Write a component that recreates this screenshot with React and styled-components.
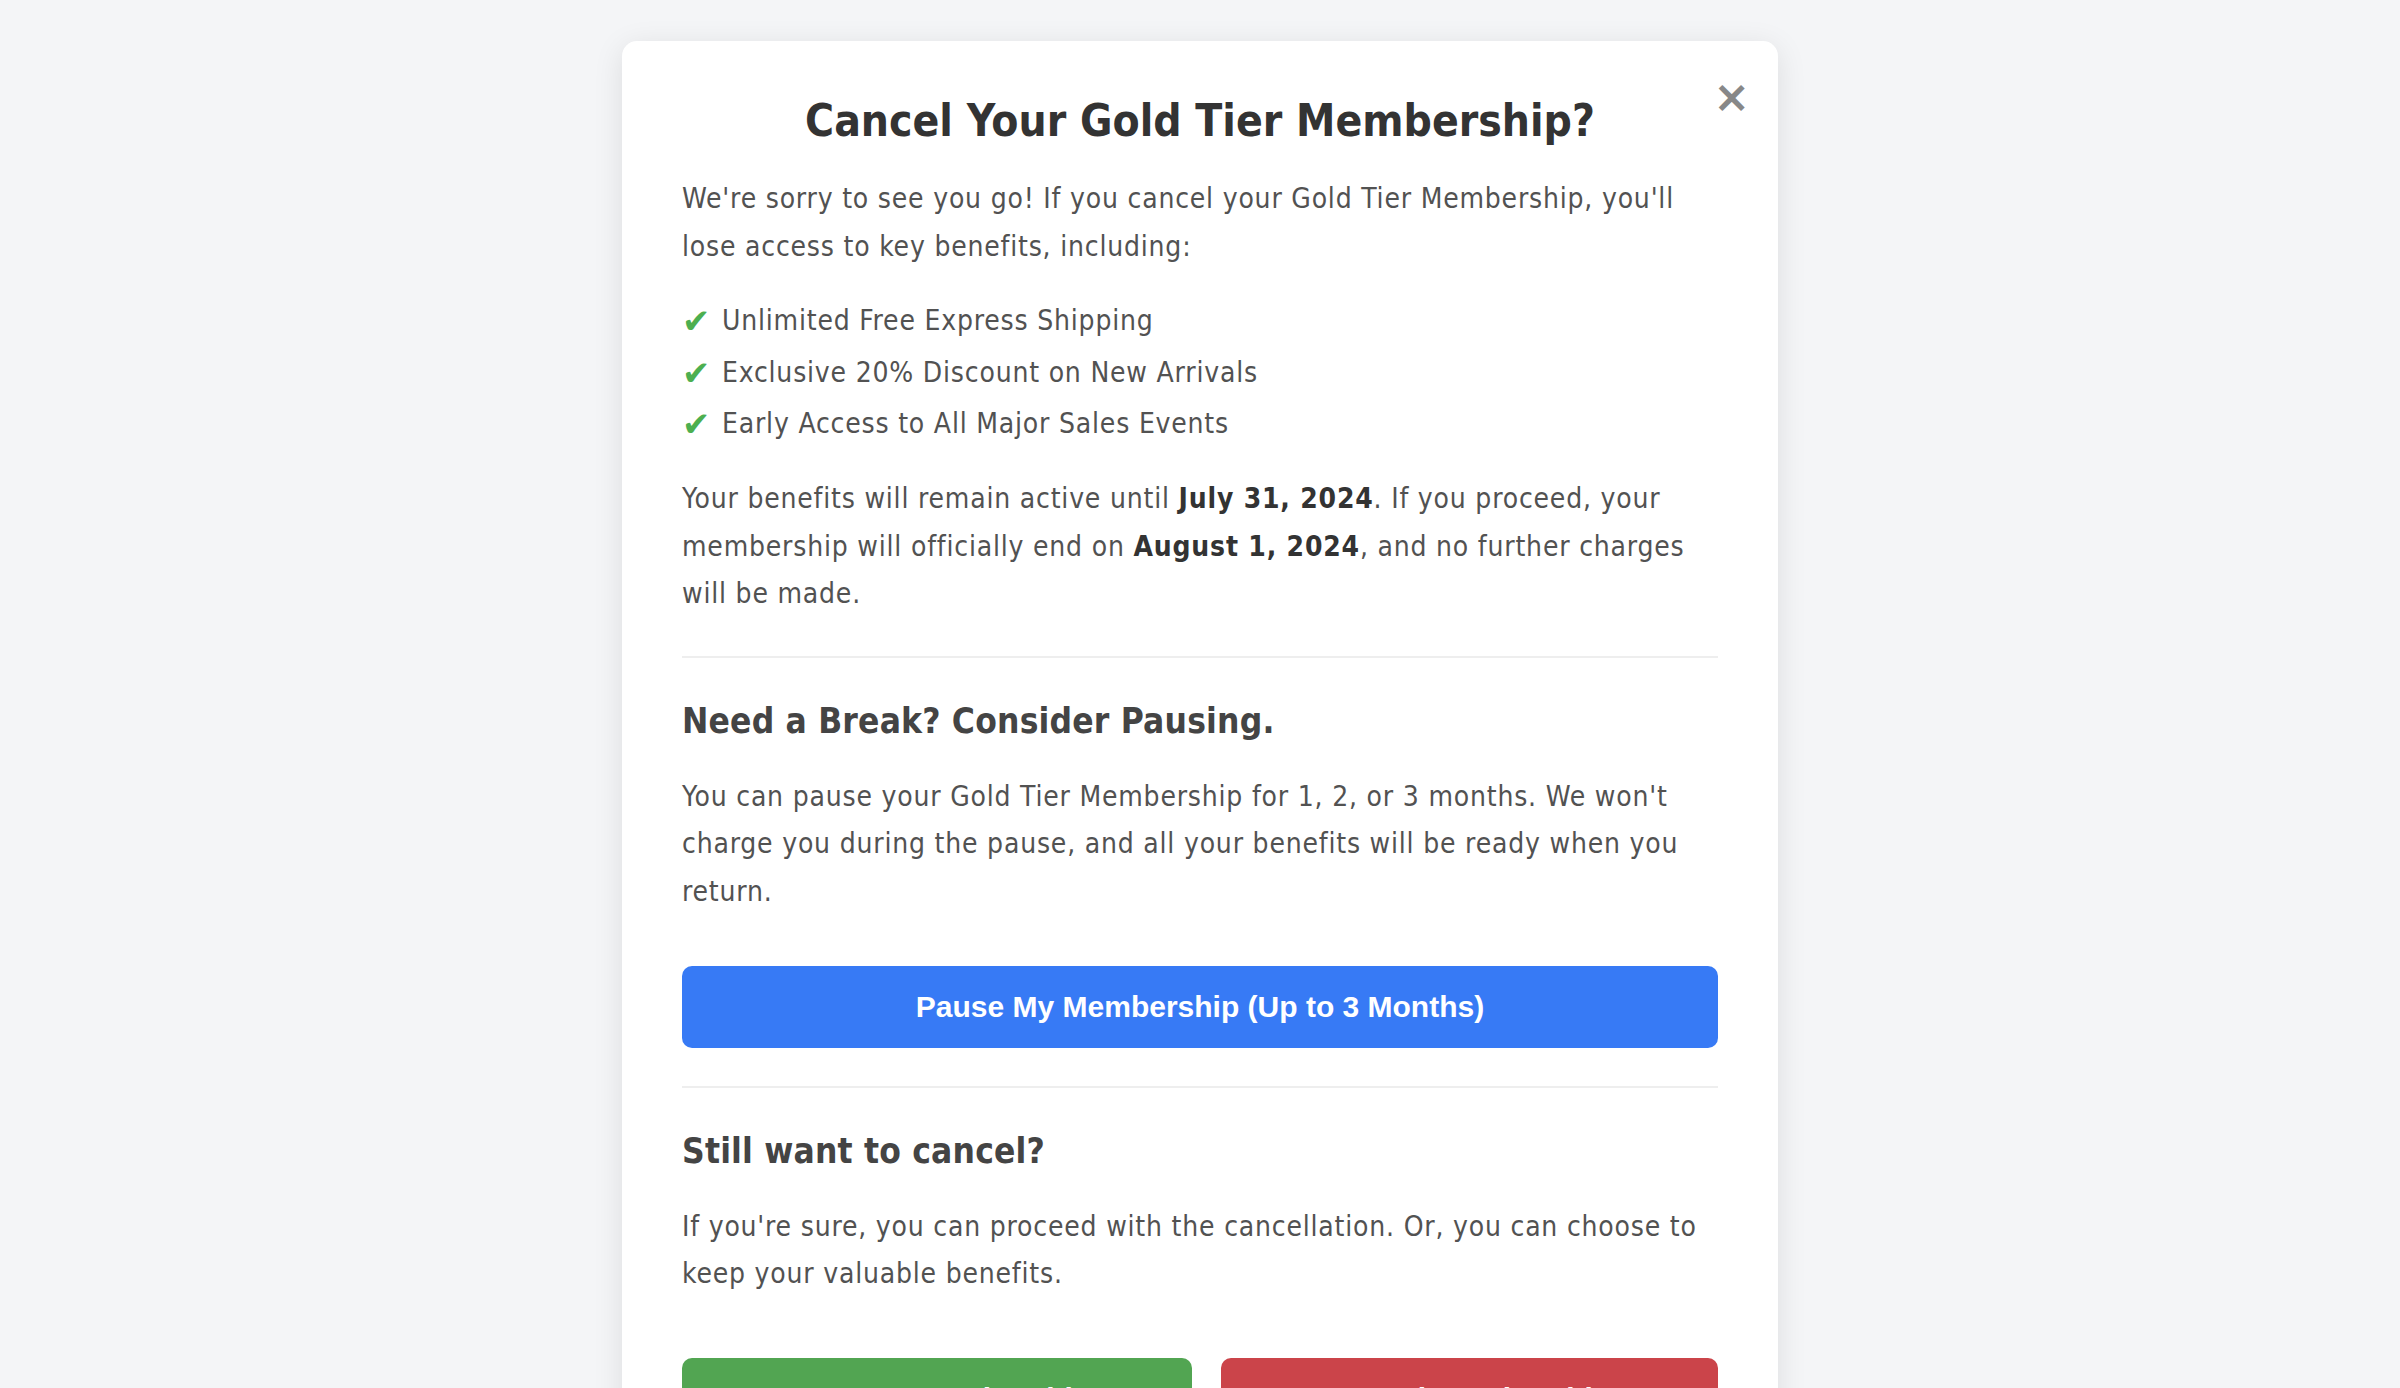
import styled, { createGlobalStyle } from "styled-components";

const GlobalStyle = createGlobalStyle`
  body {
    margin: 0;
    background-color: #f4f5f7;
    font-family: "DejaVu Sans Condensed", "DejaVu Sans", sans-serif;
  }
`;

// Page wrapper that centers the dialog
const Page = styled.div`
  display: flex;
  justify-content: center;
  padding: 41px 0;
`;

// The white dialog card
const Modal = styled.div`
  position: relative;
  width: 1156px;
  box-sizing: border-box;
  padding: 52px 60px 60px;
  background-color: #ffffff;
  border-radius: 15px;
  box-shadow: 0 6px 30px rgba(0, 0, 0, 0.1);
`;

const CloseButton = styled.button`
  position: absolute;
  top: 34px;
  right: 28px;
  padding: 0;
  border: none;
  background: none;
  color: #888;
  font-family: "DejaVu Sans", sans-serif;
  font-size: 44px;
  font-weight: bold;
  line-height: 1;
  cursor: pointer;
`;

const Title = styled.h1`
  margin: 0 0 27px;
  text-align: center;
  font-size: 44px;
  line-height: 1.25;
  color: #333;
`;

const Text = styled.p`
  margin: 0;
  font-size: 28px;
  line-height: 1.7;
  letter-spacing: 0.8px;
  color: #525252;

  strong {
    color: #333;
  }
`;

const BenefitList = styled.ul`
  display: flex;
  flex-direction: column;
  gap: 4px;
  margin: 27px 0 27px;
  padding: 0;
  list-style: none;
`;

const Benefit = styled.li`
  display: flex;
  align-items: center;
  gap: 14px;
  font-size: 28px;
  line-height: 1.7;
  letter-spacing: 0.8px;
  color: #525252;
`;

const Check = styled.span`
  width: 26px;
  color: #4caf50;
  font-family: "DejaVu Sans", sans-serif;
  font-size: 34px;
  line-height: 1;
  letter-spacing: 0;
`;

const Section = styled.section`
  margin-top: 38px;
  padding-top: 42px;
  border-top: 2px solid #eeeeee;
`;

const SectionTitle = styled.h2`
  margin: 0 0 31px;
  font-size: 35px;
  line-height: 1.2;
  letter-spacing: 0.2px;
  color: #444;
`;

const PauseButton = styled.button`
  display: block;
  width: 100%;
  height: 82px;
  margin-top: 50px;
  border: none;
  border-radius: 10px;
  background-color: #377af5;
  color: #ffffff;
  font-family: "Liberation Sans", Arial, sans-serif;
  font-size: 30px;
  font-weight: bold;
  cursor: pointer;
`;

const Actions = styled.div`
  display: grid;
  grid-template-columns: 510fr 497fr;
  gap: 29px;
  margin-top: 60px;
`;

const ActionButton = styled.button`
  height: 82px;
  border: none;
  border-radius: 10px;
  background-color: ${(p) => (p.$danger ? "#cb444a" : "#52a552")};
  color: #ffffff;
  font-family: "Liberation Sans", Arial, sans-serif;
  font-size: 30px;
  font-weight: bold;
  cursor: pointer;
`;

const benefits = [
  "Unlimited Free Express Shipping",
  "Exclusive 20% Discount on New Arrivals",
  "Early Access to All Major Sales Events",
];

export default function App() {
  return (
    <>
      <GlobalStyle />
      <Page>
        <Modal>
          <CloseButton aria-label="Close">×</CloseButton>
          <Title>Cancel Your Gold Tier Membership?</Title>
          <Text>
            We're sorry to see you go! If you cancel your Gold Tier Membership,
            you'll lose access to key benefits, including:
          </Text>
          <BenefitList>
            {benefits.map((b) => (
              <Benefit key={b}>
                <Check>✔</Check>
                {b}
              </Benefit>
            ))}
          </BenefitList>
          <Text>
            Your benefits will remain active until <strong>July 31, 2024</strong>.
            If you proceed, your membership will officially end on{" "}
            <strong>August 1, 2024</strong>, and no further charges will be made.
          </Text>

          <Section>
            <SectionTitle>Need a Break? Consider Pausing.</SectionTitle>
            <Text>
              You can pause your Gold Tier Membership for 1, 2, or 3 months. We
              won't charge you during the pause, and all your benefits will be
              ready when you return.
            </Text>
            <PauseButton>Pause My Membership (Up to 3 Months)</PauseButton>
          </Section>

          <Section>
            <SectionTitle>Still want to cancel?</SectionTitle>
            <Text>
              If you're sure, you can proceed with the cancellation. Or, you can
              choose to keep your valuable benefits.
            </Text>
            <Actions>
              <ActionButton>Keep My Membership</ActionButton>
              <ActionButton $danger>Cancel Membership</ActionButton>
            </Actions>
          </Section>
        </Modal>
      </Page>
    </>
  );
}
